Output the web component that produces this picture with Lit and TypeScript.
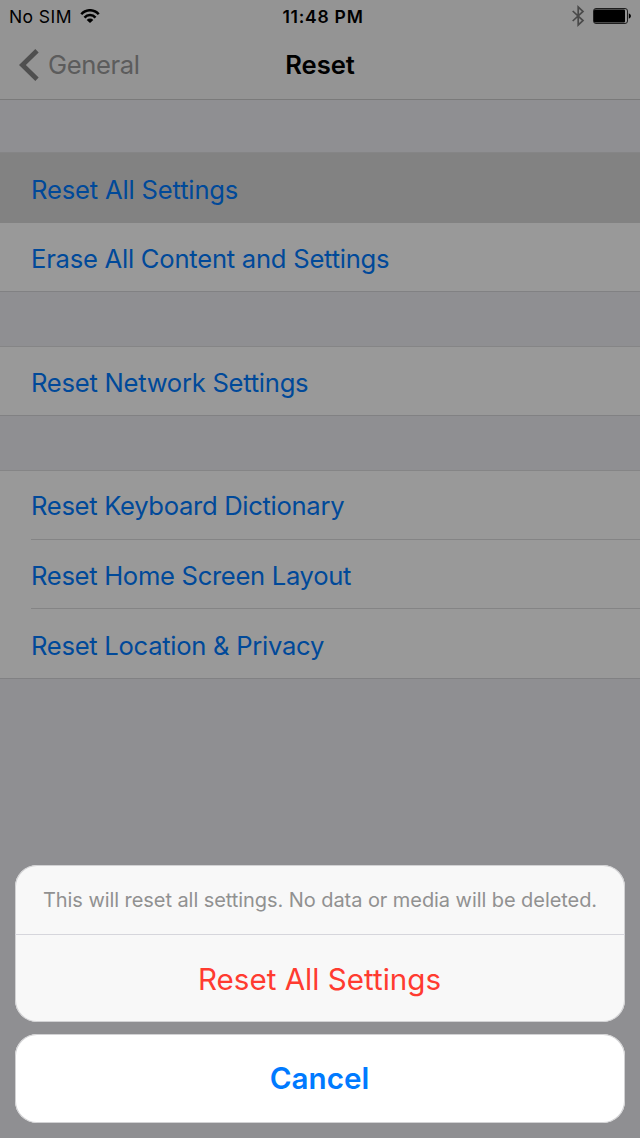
import { LitElement, html, css, svg } from "lit";
import { customElement } from "lit/decorators.js";

interface Row {
  label: string;
  cls: string;
}

const GROUPS: Row[][] = [
  [
    { label: "Reset All Settings", cls: "row tall selected t-all" },
    { label: "Erase All Content and Settings", cls: "row t-erase" },
  ],
  [{ label: "Reset Network Settings", cls: "row t-net" }],
  [
    { label: "Reset Keyboard Dictionary", cls: "row t-key" },
    { label: "Reset Home Screen Layout", cls: "row mid inset t-home" },
    { label: "Reset Location & Privacy", cls: "row tall inset t-loc" },
  ],
];

const wifi = svg`<path d="M1.3 5.2A11.5 11.5 0 0 1 18.7 5.2" /><path d="M4.5 8.6A7.3 7.3 0 0 1 15.5 8.6" /><path class="dot" d="M6.7 11A4.6 4.6 0 0 1 13.3 11L10 14.1Z" />`;

@customElement("app-root")
export class AppRoot extends LitElement {
  static styles = css`
    :host {
      display: block;
      position: relative;
      width: 640px;
      height: 1138px;
      overflow: hidden;
      background: #efeff4;
      font-family: Inter, "Liberation Sans", sans-serif;
      color: #000;
    }
    * { box-sizing: border-box; }
    .top {
      height: 100px;
      background: #f7f7f7;
      border-bottom: 1px solid #cbcbcb;
    }
    .status, .nav {
      display: grid;
      grid-template-columns: 1fr auto 1fr;
      align-items: center;
    }
    .status { height: 32px; font-size: 17.5px; padding: 0 9px 0 9px; }
    .nav { height: 66px; padding: 0 19px; font-size: 25.6px; }
    .left { display: flex; align-items: center; }
    .right { display: flex; align-items: center; justify-content: flex-end; }
    .sim { letter-spacing: 0.42px; }
    .wifi { width: 20px; height: 15px; margin-left: 8px; fill: none; stroke: #000; stroke-width: 2.5; }
    .dot { fill: #000; stroke: none; }
    .time { font-weight: 600; letter-spacing: 0.75px; margin-left: 6px; }
    .bt { width: 14px; height: 22px; margin-right: 8px; fill: none; stroke: #7b7b7b; stroke-width: 1.7; }
    .battery { width: 38px; height: 16px; }
    .chev { width: 20px; height: 34px; margin-right: 9px; fill: none; stroke: #848484; stroke-width: 4.8; }
    .back { color: #999; letter-spacing: -0.4px; padding-bottom: 1px; }
    .title { font-weight: 600; padding-bottom: 1px; }
    .list { display: flex; flex-direction: column; gap: 54px; padding-top: 52px; }
    .group {
      background: #fff;
      border-top: 1px solid #dededf;
      border-bottom: 1px solid #d8d8da;
      display: flex;
      flex-direction: column;
    }
    .row {
      position: relative;
      height: 68px;
      padding: 3px 0 0 31px;
      display: flex;
      align-items: center;
      font-size: 25.6px;
      color: #007aff;
      white-space: nowrap;
    }
    .mid { height: 69px; }
    .tall { height: 70px; }
    .selected { background: #d9d9d9; }
    .inset { padding-top: 5px; }
    .t-all { letter-spacing: -0.17px; padding-top: 2px; }
    .t-erase { letter-spacing: -0.24px; }
    .t-net { letter-spacing: -0.26px; }
    .t-key { letter-spacing: -0.31px; padding-top: 1px; }
    .t-home { letter-spacing: -0.31px; padding-top: 3px; }
    .t-loc { letter-spacing: -0.28px; }
    .inset::before {
      content: "";
      position: absolute;
      left: 31px;
      right: 0;
      top: 0;
      height: 1px;
      background: #dcdcde;
    }
    .dim {
      position: absolute;
      inset: 0;
      background: rgba(0, 0, 0, 0.4);
      display: flex;
      flex-direction: column;
      justify-content: flex-end;
      gap: 12px;
      padding: 0 15px 15px;
      text-align: center;
    }
    .sheet, .cancel {
      border-radius: 22px;
      overflow: hidden;
      white-space: nowrap;
      box-shadow: inset 0 0 0 1px #d2d2d4;
    }
    .sheet { background: #f8f8f8; height: 157px; }
    .msg {
      height: 70px;
      line-height: 71px;
      border-bottom: 1px solid #d6d6dc;
      font-size: 20px;
      letter-spacing: -0.065px;
      color: #919191;
    }
    .danger { height: 87px; line-height: 89px; font-size: 29.6px; color: #ff3b30; padding-right: 1px; }
    .cancel { background: #fff; height: 89px; line-height: 88px; font-size: 29.6px; font-weight: 600; color: #007aff; padding-right: 1px; }
  `;

  render() {
    return html`
      <div class="top">
        <div class="status">
          <div class="left"><span class="sim">No SIM</span><svg class="wifi" viewBox="0 0 20 15">${wifi}</svg></div>
          <span class="time">11:48 PM</span>
          <div class="right">
            <svg class="bt" viewBox="0 0 14 22"><path d="M1.7 6L12 15.6L7.2 20V2L12 6.4L1.7 16" /></svg>
            <svg class="battery" viewBox="0 0 38 16">
              <rect x="0.5" y="0.5" width="34" height="15" rx="2.5" fill="none" stroke="#333" />
              <rect x="1" y="1.5" width="31" height="13" rx="1" fill="#000" />
              <path d="M35.8 5.2Q38 6.2 38 8T35.8 10.8Z" />
            </svg>
          </div>
        </div>
        <div class="nav">
          <div class="left"><svg class="chev" viewBox="0 0 20 34"><path d="M18 2.7L3.4 17L18 31.3" /></svg><span class="back">General</span></div>
          <span class="title">Reset</span>
          <span></span>
        </div>
      </div>
      <div class="list">
        ${GROUPS.map((g) => html`<div class="group">${g.map((r) => html`<div class=${r.cls}><span>${r.label}</span></div>`)}</div>`)}
      </div>
      <div class="dim">
        <div class="sheet">
          <div class="msg">This will reset all settings. No data or media will be deleted.</div>
          <div class="danger">Reset All Settings</div>
        </div>
        <div class="cancel">Cancel</div>
      </div>
    `;
  }
}
